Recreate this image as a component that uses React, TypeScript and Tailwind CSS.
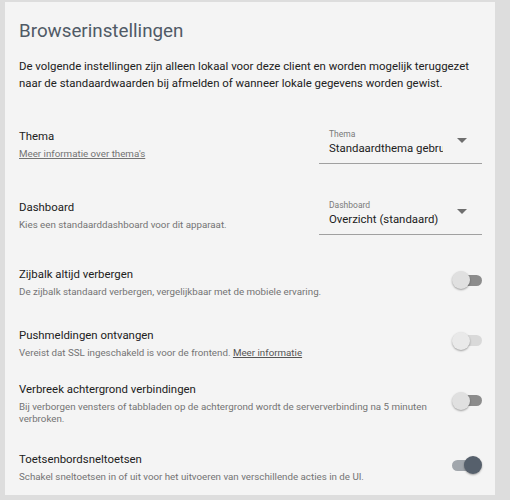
import React from "react";

function Select({ label, value }: { label: string; value: string }) {
  return (
    <div className="relative w-[163px] h-[40px] border-b border-[#a0a0a0] pl-[10px] pt-[6px] shrink-0">
      <div className="text-[8.5px] leading-[9px] text-[#7a7a7a]">{label}</div>
      <div className="mt-[1px] w-[114px] overflow-hidden whitespace-nowrap text-[11.4px] leading-[16px] text-[#212121]">{value}</div>
      <div className="absolute right-[15px] top-[14px] w-0 h-0 border-l-[5px] border-r-[5px] border-t-[5px] border-l-transparent border-r-transparent border-t-[#6e6e6e]" />
    </div>
  );
}

function Toggle({ on, disabled }: { on?: boolean; disabled?: boolean }) {
  const track = on ? "bg-[#a1a6ac]" : disabled ? "bg-[#d9d9d9]" : "bg-[#8c8c8c]";
  const thumb = on ? "bg-[#56606c]" : disabled ? "bg-[#e9e9e9]" : "bg-[#e0e0e0]";
  return (
    <div className="relative w-[30px] h-[18px] mb-[4px] shrink-0">
      <div className={`absolute top-[3.5px] h-[11px] w-[27px] rounded-full ${on ? "left-0" : "left-[3px]"} ${track}`} />
      <div
        className={`absolute top-0 w-[18px] h-[18px] rounded-full shadow-[0_1px_2px_rgba(0,0,0,0.35)] ${on ? "right-0" : "left-0"} ${thumb}`}
      />
    </div>
  );
}

function Row({ h, title, children, control }: { h: string; title: string; children: React.ReactNode; control: React.ReactNode }) {
  return (
    <div className={`flex items-center justify-between gap-4 ${h}`}>
      <div>
        <div className="text-[11.4px] leading-[16px] text-[#212121]">{title}</div>
        <div className="mt-[4px] text-[9.75px] leading-[12px] text-[#737373]">{children}</div>
      </div>
      {control}
    </div>
  );
}

export default function App() {
  return (
    <div className="w-[510px] h-[500px] bg-[#dddddd] pt-[2px] pl-[5px] overflow-hidden" style={{ fontFamily: "Roboto, 'Liberation Sans', sans-serif" }}>
      <div className="w-[490px] h-[493px] bg-[#f4f4f4] pl-[14px] pr-[13px] pt-[15px] overflow-hidden">
        <h1 className="text-[18.8px] leading-[28px] text-[#505a66]">Browserinstellingen</h1>
        <p className="mt-[13px] text-[11.4px] leading-[17px] text-[#212121]">
          De volgende instellingen zijn alleen lokaal voor deze client en worden mogelijk teruggezet naar de standaardwaarden bij afmelden of wanneer lokale gegevens worden gewist.
        </p>
        <div className="mt-[17px]">
          <Row h="h-[70px]" title="Thema" control={<Select label="Thema" value="Standaardthema gebruiken" />}>
            <span className="underline">Meer informatie over thema's</span>
          </Row>
          <Row h="h-[72px]" title="Dashboard" control={<Select label="Dashboard" value="Overzicht (standaard)" />}>
            Kies een standaarddashboard voor dit apparaat.
          </Row>
          <Row h="h-[62px]" title="Zijbalk altijd verbergen" control={<Toggle />}>
            De zijbalk standaard verbergen, vergelijkbaar met de mobiele ervaring.
          </Row>
          <Row h="h-[59px]" title="Pushmeldingen ontvangen" control={<Toggle disabled />}>
            Vereist dat SSL ingeschakeld is voor de frontend. <span className="underline text-[#555]">Meer informatie</span>
          </Row>
          <Row h="h-[61px]" title="Verbreek achtergrond verbindingen" control={<Toggle />}>
            Bij verborgen vensters of tabbladen op de achtergrond wordt de serververbinding na 5 minuten verbroken.
          </Row>
          <Row h="h-[68px]" title="Toetsenbordsneltoetsen" control={<Toggle on />}>
            Schakel sneltoetsen in of uit voor het uitvoeren van verschillende acties in de UI.
          </Row>
        </div>
      </div>
    </div>
  );
}
